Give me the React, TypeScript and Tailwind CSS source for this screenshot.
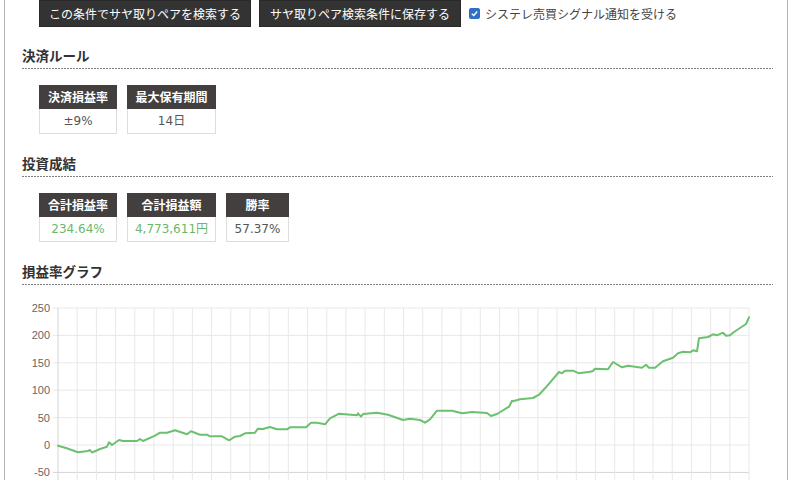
import React from 'react';

const font = { fontFamily: '"Noto Sans CJK JP", "Noto Sans", sans-serif' };
const numFont = { fontFamily: '"DejaVu Sans", "Noto Sans CJK JP", sans-serif' };

// chart geometry, in page pixels
const PLOT_LEFT = 58;
const PLOT_RIGHT = 749;
const ZERO_Y = 445;
const PX_PER_50 = 27.4;

const yTicks = [250, 200, 150, 100, 50, 0, -50];

const points: [number, number][] = [
  [58, 445.7], [66, 448], [78, 452.3], [88, 451], [90, 450], [92, 452.5], [100, 449], [107, 446.7],
  [109, 442.3], [112, 445], [119, 440], [123, 441], [137, 441], [140, 439], [143, 441],
  [155, 435.7], [160, 432.7], [167, 432.7], [175, 430.3], [187, 434.3], [191, 431.3],
  [200, 434.7], [207, 434.7], [210, 436.3], [222, 436.3], [229, 440.3], [235, 436.7],
  [240, 436], [245, 433.3], [255, 432.7], [258, 428.7], [263, 429], [270, 427], [277, 429.3],
  [287, 429.3], [290, 427.3], [306, 427.3], [311, 422.7], [317, 422.7], [325, 424.3],
  [330, 418.3], [339, 413.7], [357, 415.3], [358, 413.3], [361, 416.7], [363, 414],
  [377, 412.7], [388, 414.7], [403, 420], [410, 418.7], [420, 420], [425, 422.7],
  [430, 419.3], [437, 410.7], [452, 410.7], [462, 413.3], [472, 412], [487, 413],
  [491, 416], [497, 414], [509, 406.7], [512, 400.7], [513, 401.3], [520, 399.3],
  [533, 398], [539, 394.7], [545, 388.3], [559, 372], [562, 373.3], [565, 370.7],
  [573, 370.7], [579, 373.3], [590, 371.7], [593, 371], [595, 368.7], [608, 369.3],
  [613, 362], [622, 367.3], [628, 365.7], [642, 367.7], [646, 364.7], [649, 367.7],
  [655, 367.7], [663, 361.3], [673, 357.7], [678, 353.3], [683, 351.7], [690, 352.3],
  [693, 350.3], [697, 351.3], [699, 338.3], [708, 337], [713, 334.3], [717, 335.3],
  [723, 332.7], [726, 335.7], [730, 335.3], [734, 332], [746, 324], [749, 317.3],
];

function SectionHeading({ title, className }: { title: string; className?: string }) {
  return (
    <div className={className}>
      <h3 className="text-[13.5px] font-bold leading-[20px] text-[#333] pb-[3px]">{title}</h3>
      <div className="h-px bg-[linear-gradient(to_right,#808080_2px,transparent_2px)] bg-[length:3px_1px]" />
    </div>
  );
}

function StatBox({ label, value, width, green }: { label: string; value: string; width: string; green?: boolean }) {
  return (
    <div className={'flex flex-col ' + width}>
      <div className="h-[24px] flex items-center justify-center bg-[#443f3f] text-white text-[12px] font-bold border border-[#443f3f]">
        {label}
      </div>
      <div
        style={numFont}
        className={
          'h-[25px] flex items-center justify-center border border-t-0 border-[#dddddd] text-[12px] ' +
          (green ? 'text-[#6db76d]' : 'text-[#555]')
        }
      >
        {value}
      </div>
    </div>
  );
}

function ProfitChart() {
  const y = (v: number) => ZERO_Y - (v / 50) * PX_PER_50;
  const step = (PLOT_RIGHT - PLOT_LEFT) / 36;
  const cols = Array.from({ length: 37 }, (_, i) => PLOT_LEFT + i * step);

  return (
    <svg width={782} height={195} viewBox="5 285 782 195" className="block">
      {yTicks.map((t) => (
        <g key={t}>
          <line x1={53} x2={PLOT_RIGHT} y1={y(t)} y2={y(t)} stroke={t === -50 ? '#d4d4d4' : '#e8e8e8'} strokeWidth={1} />
          <text x={50} y={y(t)} textAnchor="end" dominantBaseline="central" fontSize={11} fill="#666" fontFamily='"Liberation Sans", Arial, sans-serif'>
            {t}
          </text>
        </g>
      ))}
      {cols.map((x, i) => (
        <line key={i} x1={x} x2={x} y1={308} y2={480} stroke={i === 0 ? '#d4d4d4' : '#e8e8e8'} strokeWidth={1} />
      ))}
      <polyline
        points={points.map(([px, py]) => `${px},${py}`).join(' ')}
        fill="none"
        stroke="#6cc070"
        strokeWidth={2}
        strokeLinejoin="round"
        strokeLinecap="round"
      />
    </svg>
  );
}

export default function App() {
  return (
    <div className="w-[790px] h-[480px] overflow-hidden bg-white" style={font}>
      <div className="ml-[4px] w-[784px] h-full border-l border-r border-[#b5b5b5]">
        <div className="pl-[17px] pr-[14px]">
          {/* action row */}
          <div className="flex items-center h-[27px] pl-[17px]">
            <button className="w-[212px] h-[27px] bg-[#333] border border-[#2a2a2a] text-white text-[12px]">
              この条件でサヤ取りペアを検索する
            </button>
            <button className="ml-[8px] w-[202px] h-[27px] bg-[#333] border border-[#2a2a2a] text-white text-[12px]">
              サヤ取りペア検索条件に保存する
            </button>
            <label className="ml-[8px] flex items-center gap-[5px] text-[12px] text-[#444]">
              <span className="w-[11px] h-[11px] rounded-[2px] bg-[#2f6fc8] flex items-center justify-center">
                <svg width="9" height="9" viewBox="0 0 10 10">
                  <path d="M2 5.2 L4.2 7.3 L8 2.8" fill="none" stroke="white" strokeWidth="1.6" />
                </svg>
              </span>
              <span>システレ売買シグナル通知を受ける</span>
            </label>
          </div>

          <SectionHeading title="決済ルール" className="mt-[18px]" />
          <div className="mt-[16px] pl-[17px] flex gap-[10px]">
            <StatBox label="決済損益率" value="±9%" width="w-[78px]" />
            <StatBox label="最大保有期間" value="14日" width="w-[89px]" />
          </div>

          <SectionHeading title="投資成結" className="mt-[19px]" />
          <div className="mt-[16px] pl-[17px] flex gap-[10px]">
            <StatBox label="合計損益率" value="234.64%" width="w-[78px]" green />
            <StatBox label="合計損益額" value="4,773,611円" width="w-[89px]" green />
            <StatBox label="勝率" value="57.37%" width="w-[63px]" />
          </div>

          <SectionHeading title="損益率グラフ" className="mt-[19px]" />
        </div>
        <ProfitChart />
      </div>
    </div>
  );
}
